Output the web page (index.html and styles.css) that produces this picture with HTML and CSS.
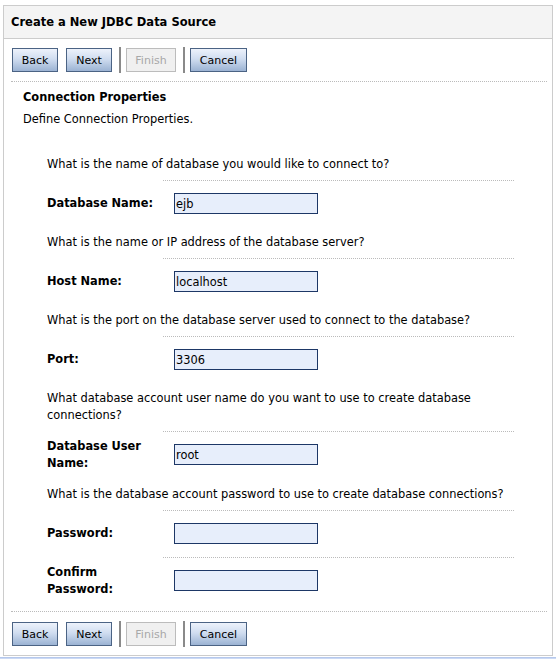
FILE: index.html
```html
<!DOCTYPE html>
<html>
<head>
<meta charset="utf-8">
<link rel="stylesheet" href="styles.css">
</head>
<body>
<div class="panel">
  <div class="header"><span class="title">Create a New JDBC Data Source</span></div>
  <div class="toolbar">
    <button class="btn">Back</button>
    <button class="btn">Next</button>
    <span class="sep"></span>
    <button class="btn btn-disabled">Finish</button>
    <span class="sep"></span>
    <button class="btn btn-cancel">Cancel</button>
  </div>
  <div class="rule-full"></div>
  <div class="content">
    <div class="section-title">Connection Properties</div>
    <div class="section-desc">Define Connection Properties.</div>

    <div class="q">What is the name of database you would like to connect to?</div>
    <div class="rule"></div>
    <div class="field"><label class="label">Database Name:</label><input class="input" type="text" value="ejb"></div>

    <div class="q">What is the name or IP address of the database server?</div>
    <div class="rule"></div>
    <div class="field"><label class="label">Host Name:</label><input class="input" type="text" value="localhost"></div>

    <div class="q">What is the port on the database server used to connect to the database?</div>
    <div class="rule"></div>
    <div class="field"><label class="label">Port:</label><input class="input" type="text" value="3306"></div>

    <div class="q">What database account user name do you want to use to create database connections?</div>
    <div class="rule"></div>
    <div class="field"><label class="label">Database User Name:</label><input class="input" type="text" value="root"></div>

    <div class="q q-loose">What is the database account password to use to create database connections?</div>
    <div class="rule"></div>
    <div class="field"><label class="label">Password:</label><input class="input" type="password" value=""></div>

    <div class="rule rule-tight"></div>
    <div class="field"><label class="label">Confirm Password:</label><input class="input" type="password" value=""></div>
  </div>
  <div class="rule-full rule-bottom"></div>
  <div class="toolbar toolbar-bottom">
    <button class="btn">Back</button>
    <button class="btn">Next</button>
    <span class="sep"></span>
    <button class="btn btn-disabled">Finish</button>
    <span class="sep"></span>
    <button class="btn btn-cancel">Cancel</button>
  </div>
</div>
<div class="strip"></div>
</body>
</html>
```

FILE: styles.css
```css
html, body {
  margin: 0;
  padding: 0;
  background: #ffffff;
}
body {
  font-family: "DejaVu Sans", Tahoma, sans-serif;
  font-size: 11.4px;
  color: #000;
  overflow: hidden;
}
.panel {
  margin: 5px 0 0 3px;
  width: 548px;
  border: 1px solid #cccccc;
}
.header {
  height: 32px;
  background: #f4f4f4;
  border-bottom: 1px solid #cccccc;
  display: flex;
  align-items: center;
  padding-left: 7px;
}
.title {
  font-weight: bold;
  font-size: 11.5px;
}
.toolbar {
  display: flex;
  align-items: center;
  padding: 9px 0 0 8px;
  height: 24px;
}
.btn {
  font-family: "DejaVu Sans", Tahoma, sans-serif;
  font-size: 11px;
  height: 24px;
  width: 46px;
  padding: 0;
  margin: 0 8px 0 0;
  border: 1px solid #4b6384;
  background: linear-gradient(#edf2fb, #d0ddf0 45%, #9bb3d3);
  color: #000;
}
.btn-disabled {
  width: 50px;
  border-color: #bcbcbc;
  background: #f0f0f0;
  color: #a8a8a8;
}
.btn-cancel {
  width: 57px;
}
.sep {
  width: 2px;
  height: 26px;
  background: #8a8a8a;
  margin: 0 5px 0 -1px;
}
.rule-full {
  margin: 9px 5px 0 7px;
  border-top: 1px dotted #bbbbbb;
}
.content {
  padding: 0 0 0 18px;
}
.section-title {
  font-weight: bold;
  font-size: 11.4px;
  line-height: 16px;
  margin: 7px 0 0 1px;
}
.section-desc {
  line-height: 16px;
  margin: 6px 0 0 1px;
}
.q {
  margin: 8px 30px 0 25px;
  line-height: 17px;
}
.q-loose {
  margin-top: 9px;
}
.section-desc + .q {
  margin-top: 29px;
}
.rule {
  margin: 7px 38px 0 141px;
  border-top: 1px dotted #bbbbbb;
}
.rule-tight {
  margin-top: 1px;
}
.field {
  display: flex;
  align-items: center;
  height: 45px;
  padding-left: 25px;
}
.label {
  width: 110px;
  margin-right: 17px;
  font-weight: bold;
  line-height: 17px;
}
.input {
  box-sizing: border-box;
  width: 144px;
  height: 21px;
  margin: 0;
  padding: 0 1px;
  border: 1px solid #1d3766;
  background: #e7eefb;
  font-family: "DejaVu Sans", Tahoma, sans-serif;
  font-size: 11.4px;
  color: #000;
  outline: none;
}
.rule-bottom {
  margin-top: 8px;
}
.toolbar-bottom {
  padding-top: 10px;
  padding-bottom: 9px;
}
.strip {
  margin-top: 1px;
  height: 10px;
  background: #cbd9f4;
  border-top: 1px solid #b5c8ec;
}
```
